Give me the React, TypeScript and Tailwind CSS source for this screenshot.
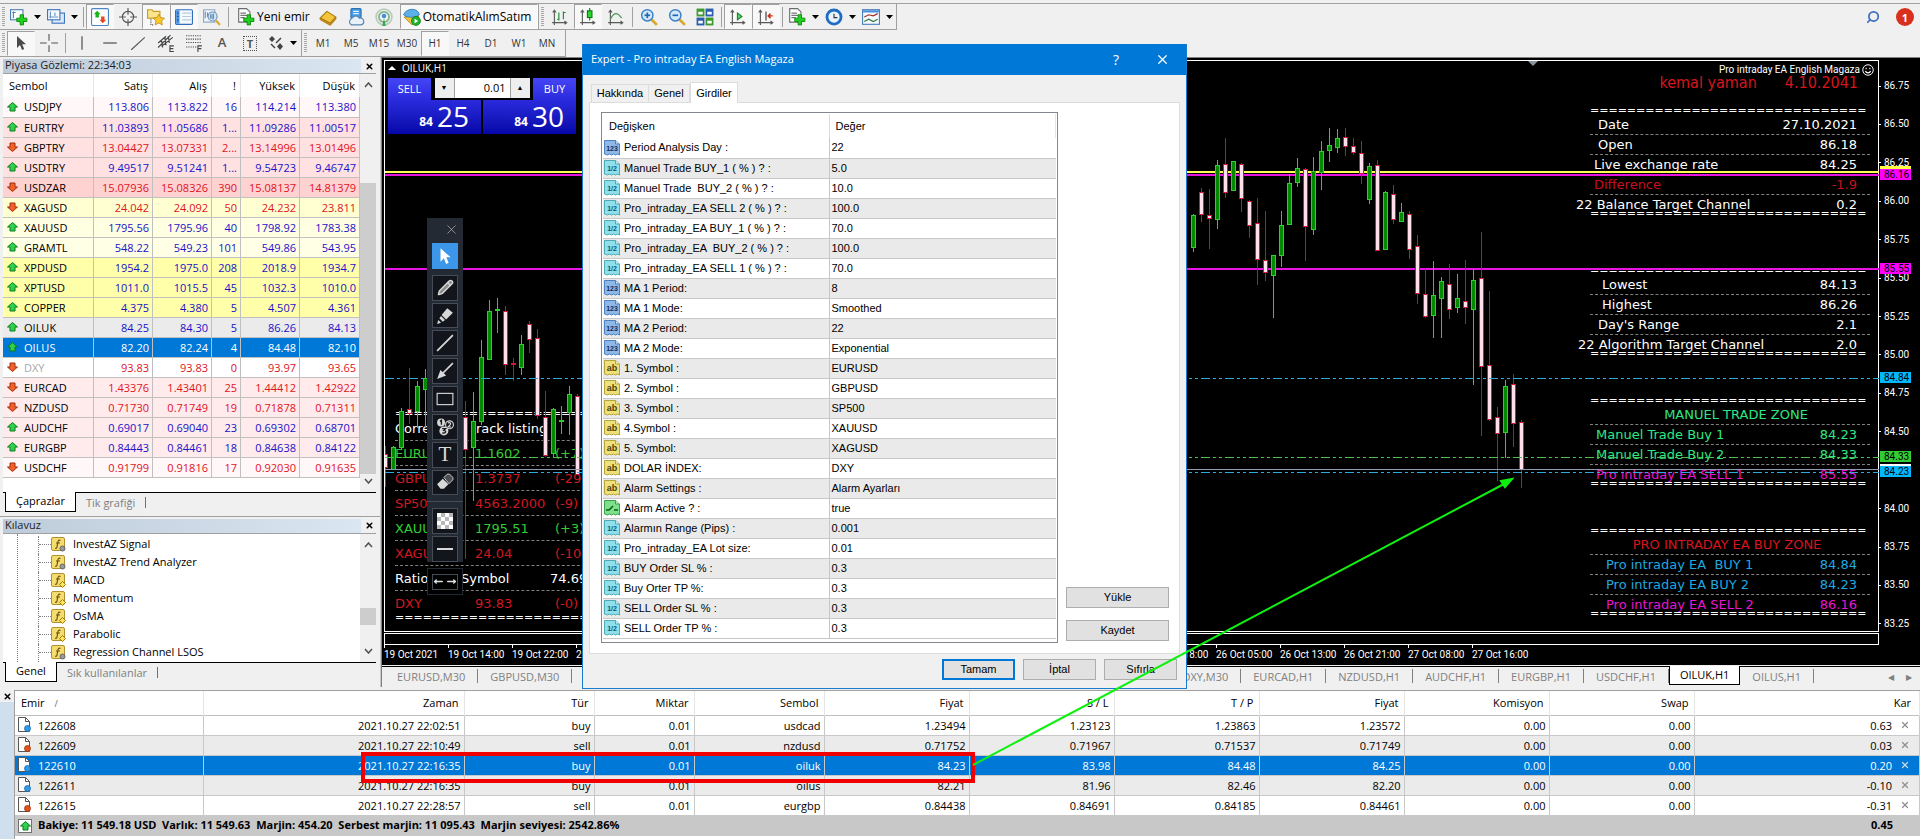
import React from 'react';
import { Search, Pencil, MoveLeft, MoveRight, X } from 'lucide-react';

type Side = 'up' | 'down';

interface Quote {
  symbol: string;
  side: Side;
  values: string[];
  bg: string;
  muted?: boolean;
}

const quotes: Quote[] = [
  { symbol: 'USDJPY', side: 'up', values: ['113.806', '113.822', '16', '114.214', '113.380'], bg: 'bg-[#fff7f8]' },
  { symbol: 'EURTRY', side: 'up', values: ['11.03893', '11.05686', '1...', '11.09286', '11.00517'], bg: 'bg-[#ffe1e1]' },
  { symbol: 'GBPTRY', side: 'down', values: ['13.04427', '13.07331', '2...', '13.14996', '13.01496'], bg: 'bg-[#ffe1e1]' },
  { symbol: 'USDTRY', side: 'up', values: ['9.49517', '9.51241', '1...', '9.54723', '9.46747'], bg: 'bg-[#ffe1e1]' },
  { symbol: 'USDZAR', side: 'down', values: ['15.07936', '15.08326', '390', '15.08137', '14.81379'], bg: 'bg-[#ffd2d2]' },
  { symbol: 'XAGUSD', side: 'down', values: ['24.042', '24.092', '50', '24.232', '23.811'], bg: 'bg-[#ffffd2]' },
  { symbol: 'XAUUSD', side: 'up', values: ['1795.56', '1795.96', '40', '1798.92', '1783.38'], bg: 'bg-[#ffffe1]' },
  { symbol: 'GRAMTL', side: 'up', values: ['548.22', '549.23', '101', '549.86', '543.95'], bg: 'bg-[#ffffe6]' },
  { symbol: 'XPDUSD', side: 'up', values: ['1954.2', '1975.0', '208', '2018.9', '1934.7'], bg: 'bg-[#ffffaa]' },
  { symbol: 'XPTUSD', side: 'up', values: ['1011.0', '1015.5', '45', '1032.3', '1010.0'], bg: 'bg-[#ffffaa]' },
  { symbol: 'COPPER', side: 'up', values: ['4.375', '4.380', '5', '4.507', '4.361'], bg: 'bg-[#ffffaa]' },
  { symbol: 'OILUK', side: 'up', values: ['84.25', '84.30', '5', '86.26', '84.13'], bg: 'bg-[#ebebeb]' },
  { symbol: 'OILUS', side: 'up', values: ['82.20', '82.24', '4', '84.48', '82.10'], bg: 'bg-[#0078d7]' },
  { symbol: 'DXY', side: 'down', values: ['93.83', '93.83', '0', '93.97', '93.65'], bg: 'bg-white', muted: true },
  { symbol: 'EURCAD', side: 'down', values: ['1.43376', '1.43401', '25', '1.44412', '1.42922'], bg: 'bg-[#ffebeb]' },
  { symbol: 'NZDUSD', side: 'down', values: ['0.71730', '0.71749', '19', '0.71878', '0.71311'], bg: 'bg-[#ffebeb]' },
  { symbol: 'AUDCHF', side: 'up', values: ['0.69017', '0.69040', '23', '0.69302', '0.68701'], bg: 'bg-[#ffebeb]' },
  { symbol: 'EURGBP', side: 'up', values: ['0.84443', '0.84461', '18', '0.84638', '0.84122'], bg: 'bg-[#ffebeb]' },
  { symbol: 'USDCHF', side: 'down', values: ['0.91799', '0.91816', '17', '0.92030', '0.91635'], bg: 'bg-[#fff7f8]' },
];

const indicators = [
  { name: 'InvestAZ Signal', custom: true },
  { name: 'InvestAZ Trend Analyzer', custom: true },
  { name: 'MACD', custom: false },
  { name: 'Momentum', custom: false },
  { name: 'OsMA', custom: false },
  { name: 'Parabolic', custom: false },
  { name: 'Regression Channel LSOS', custom: true },
];

type ParamKind = 'int' | 'double' | 'string' | 'bool';

const params: [ParamKind, string, string][] = [
  ['int', 'Period Analysis Day :', '22'],
  ['double', 'Manuel Trade BUY_1 ( % ) ? :', '5.0'],
  ['double', 'Manuel Trade  BUY_2 ( % ) ? :', '10.0'],
  ['double', 'Pro_intraday_EA SELL 2 ( % ) ? :', '100.0'],
  ['double', 'Pro_intraday_EA BUY_1 ( % ) ? :', '70.0'],
  ['double', 'Pro_intraday_EA  BUY_2 ( % ) ? :', '100.0'],
  ['double', 'Pro_intraday_EA SELL 1 ( % ) ? :', '70.0'],
  ['int', 'MA 1 Period:', '8'],
  ['int', 'MA 1 Mode:', 'Smoothed'],
  ['int', 'MA 2 Period:', '22'],
  ['int', 'MA 2 Mode:', 'Exponential'],
  ['string', '1. Symbol :', 'EURUSD'],
  ['string', '2. Symbol :', 'GBPUSD'],
  ['string', '3. Symbol :', 'SP500'],
  ['string', '4.Symbol :', 'XAUUSD'],
  ['string', '5. Symbol:', 'XAGUSD'],
  ['string', 'DOLAR İNDEX:', 'DXY'],
  ['string', 'Alarm Settings :', 'Alarm Ayarları'],
  ['bool', 'Alarm Active ? :', 'true'],
  ['double', 'Alarmın Range (Pips) :', '0.001'],
  ['double', 'Pro_intraday_EA Lot size:', '0.01'],
  ['double', 'BUY Order SL % :', '0.3'],
  ['double', 'Buy Orter TP %:', '0.3'],
  ['double', 'SELL Order SL % :', '0.3'],
  ['double', 'SELL Order TP % :', '0.3'],
];

const orders = [
  ['122608', '2021.10.27 22:02:51', 'buy', '0.01', 'usdcad', '1.23494', '1.23123', '1.23863', '1.23572', '0.00', '0.00', '0.63'],
  ['122609', '2021.10.27 22:10:49', 'sell', '0.01', 'nzdusd', '0.71752', '0.71967', '0.71537', '0.71749', '0.00', '0.00', '0.03'],
  ['122610', '2021.10.27 22:16:35', 'buy', '0.01', 'oiluk', '84.23', '83.98', '84.48', '84.25', '0.00', '0.00', '0.20'],
  ['122611', '2021.10.27 22:16:35', 'buy', '0.01', 'oilus', '82.21', '81.96', '82.46', '82.20', '0.00', '0.00', '-0.10'],
  ['122615', '2021.10.27 22:28:57', 'sell', '0.01', 'eurgbp', '0.84438', '0.84691', '0.84185', '0.84461', '0.00', '0.00', '-0.31'],
];

// [x, high, low, body top, body bottom, bullish]
const candles: [number, number, number, number, number, number][] = [
  [3, 388, 429, 396, 409, 0],
  [11, 388, 412, 389, 411, 1],
  [19, 350, 392, 353, 389, 1],
  [27, 310, 366, 351, 355, 0],
  [35, 323, 370, 328, 353, 1],
  [43, 311, 369, 320, 331, 1],
  [83, 343, 501, 359, 391, 0],
  [91, 334, 443, 363, 389, 1],
  [99, 282, 367, 299, 363, 1],
  [107, 242, 301, 253, 301, 1],
  [115, 240, 275, 251, 252, 1],
  [123, 248, 317, 253, 306, 0],
  [131, 300, 323, 305, 306, 0],
  [139, 277, 317, 286, 309, 1],
  [147, 263, 295, 266, 281, 0],
  [155, 271, 361, 280, 357, 0],
  [163, 333, 399, 359, 397, 0],
  [171, 350, 399, 351, 395, 1],
  [179, 348, 376, 362, 363, 1],
  [187, 328, 377, 336, 354, 1],
  [195, 336, 417, 338, 416, 0],
  [811, 156, 194, 157, 189, 1],
  [819, 130, 164, 134, 156, 0],
  [827, 131, 191, 157, 160, 0],
  [835, 102, 171, 107, 161, 1],
  [843, 80, 140, 106, 134, 0],
  [851, 103, 132, 103, 132, 1],
  [859, 105, 154, 106, 140, 0],
  [867, 142, 180, 143, 167, 0],
  [875, 140, 227, 165, 201, 0],
  [883, 153, 223, 202, 214, 0],
  [891, 197, 260, 197, 217, 1],
  [899, 153, 209, 167, 197, 1],
  [907, 116, 166, 125, 166, 1],
  [915, 100, 129, 110, 124, 1],
  [923, 110, 203, 111, 168, 0],
  [931, 99, 177, 113, 171, 1],
  [939, 83, 132, 93, 114, 1],
  [947, 70, 104, 87, 92, 1],
  [955, 71, 95, 80, 89, 1],
  [963, 70, 98, 79, 88, 0],
  [971, 80, 97, 88, 94, 0],
  [979, 83, 126, 95, 115, 0],
  [987, 105, 146, 108, 141, 1],
  [995, 102, 192, 107, 192, 0],
  [1003, 133, 191, 134, 191, 1],
  [1011, 127, 166, 136, 161, 0],
  [1019, 145, 164, 154, 163, 1],
  [1027, 153, 201, 156, 191, 0],
  [1035, 177, 246, 188, 235, 0],
  [1043, 211, 260, 236, 258, 0],
  [1051, 203, 280, 237, 257, 1],
  [1059, 219, 280, 223, 240, 1],
  [1067, 206, 261, 226, 251, 0],
  [1075, 216, 255, 240, 249, 1],
  [1083, 202, 266, 243, 249, 0],
  [1091, 211, 327, 222, 251, 1],
  [1099, 174, 378, 220, 308, 0],
  [1107, 233, 363, 307, 361, 0],
  [1115, 349, 423, 359, 375, 0],
  [1123, 322, 400, 328, 374, 1],
  [1131, 316, 389, 326, 365, 0],
  [1139, 362, 430, 364, 411, 0],
];

const dates = [
  '19 Oct 2021', '19 Oct 14:00', '19 Oct 22:00', '20 Oct 07:00', '20 Oct 15:00', '20 Oct 23:00',
  '21 Oct 08:00', '21 Oct 16:00', '22 Oct 01:00', '22 Oct 09:00', '22 Oct 17:00', '25 Oct 02:00',
  '25 Oct 18:00', '26 Oct 05:00', '26 Oct 13:00', '26 Oct 21:00', '27 Oct 08:00', '27 Oct 16:00',
];

const prices = [
  '86.75', '86.50', '86.25', '86.00', '85.75', '85.50', '85.25', '85.00',
  '84.75', '84.50', '', '84.00', '83.75', '83.50', '83.25',
];

/* ---------- icons ---------- */

const Svg: React.FC<{ size?: number; className?: string; children: React.ReactNode }> = ({ size = 18, className, children }) => (
  <svg width={size} height={size} viewBox="0 0 16 16" fill="none" className={className} aria-hidden="true">
    {children}
  </svg>
);

const Plus = () => (
  <path d="M9 6h3v3h3v3h-3v3H9v-3H6V9h3z" fill="#1fd11f" stroke="#0a8a0a" strokeWidth="0.8" />
);

const Axes = () => (
  <path d="M3 2v13M1 13h13M1.500 4L3 2l1.500 2M12 11.500l2 1.500-2 1.500" stroke="#5a5a5a" />
);

const NewChartIcon = () => (
  <Svg>
    <rect x="0.500" y="1.500" width="11" height="9" fill="#fff" stroke="#4d7fb5" />
    <path d="M2 4h3M3 3v6" stroke="#4d7fb5" />
    <Plus />
  </Svg>
);

const ProfilesIcon = () => (
  <Svg>
    <rect x="4.500" y="4.500" width="11" height="9" fill="#dcebfb" stroke="#3f74b8" />
    <rect x="0.500" y="1.500" width="11" height="9" fill="#f5faff" stroke="#3f74b8" />
    <path d="M3 3v6M2 8h8M7 4v3" stroke="#6d94c4" />
  </Svg>
);

const MarketWatchIcon = () => (
  <Svg>
    <rect x="0.500" y="0.500" width="15" height="15" rx="1" fill="#fff" stroke="#4d86c5" />
    <path d="M5.500 2.500l3 3H7v3H4v-3H2.500z" fill="#17b417" />
    <path d="M10.500 13.500l-3-3H9v-3h3v3h1.500z" fill="#e8471c" />
  </Svg>
);

const CrosshairIcon = () => (
  <Svg>
    <circle cx="8" cy="8" r="5" stroke="#555" />
    <path d="M8 0v6M8 10v6M0 8h6M10 8h6" stroke="#555" />
  </Svg>
);

const NavigatorIcon = () => (
  <Svg>
    <path d="M0.500 1.500h4l1 1.500h6v6h-11z" fill="#fbe48b" stroke="#c79d2c" />
    <path d="M3.500 10v5h3" stroke="#555" strokeDasharray="1 1" />
    <path d="M10.500 5.500l1.500 3 3.500.5-2.500 2.500.6 3.500-3.100-1.700L7.400 15l.6-3.500L5.500 9l3.500-.5z" fill="#fcc92c" stroke="#b98711" strokeWidth="0.7" />
  </Svg>
);

const TerminalIcon = () => (
  <Svg>
    <rect x="0.500" y="1.500" width="15" height="13" rx="1" fill="#f4f9ff" stroke="#2f6db8" />
    <rect x="1" y="2" width="3" height="12" fill="#4b90dd" />
    <path d="M2.500 4v9" stroke="#123f77" strokeDasharray="1 2" />
    <path d="M6.500 4.500h8M6.500 7.500h8M6.500 10.500h8" stroke="#b9cbe0" />
  </Svg>
);

const TesterIcon = () => (
  <Svg>
    <path d="M0.500 1.500h10v11h-10z" fill="#eef5fc" stroke="#8fa9c4" />
    <path d="M2 3v6M4 4v4" stroke="#6a8cb2" />
    <circle cx="8.500" cy="7.500" r="4" fill="#cfe5f8" stroke="#7391b0" />
    <path d="M7 5.500v4M9 5v5" stroke="#3b6ba0" />
    <path d="M11.500 11l3.500 4" stroke="#d6a52b" strokeWidth="2" />
  </Svg>
);

const NewOrderIcon = () => (
  <Svg>
    <path d="M1.500.5h7l3 3v9h-10z" fill="#fff" stroke="#6b6b6b" />
    <path d="M3 4.500h5M3 6.500h6M3 8.500h4" stroke="#777" />
    <Plus />
  </Svg>
);

const BookIcon = () => (
  <Svg>
    <path d="M1 9l6-6 8 5-5 5.500z" fill="#f3c43c" stroke="#a9770d" />
    <path d="M1 9v1.500l9 5 5-5.500V8l-5 5.500z" fill="#c58d1a" stroke="#a9770d" strokeWidth="0.6" />
  </Svg>
);

const CloudIcon = () => (
  <Svg>
    <rect x="3.500" y="0.500" width="9" height="9" rx="1" fill="#3f9be6" stroke="#2b73b3" />
    <path d="M5.500 3h5M5.500 5h5" stroke="#e4f2fd" strokeWidth="1.2" />
    <path d="M4 15a3 3 0 010-5.500 4 4 0 017-.5 3 3 0 011.500 6z" fill="#e7f1fa" stroke="#5a86ad" />
  </Svg>
);

const SignalIcon = () => (
  <Svg>
    <circle cx="8" cy="8" r="7" stroke="#b5cdb9" strokeWidth="1.5" />
    <circle cx="8" cy="8" r="4.500" stroke="#7fb08a" strokeWidth="1.5" />
    <circle cx="8" cy="7" r="2" fill="#3f8fd6" />
    <path d="M8 9l-1.500 7h3z" fill="#36a64f" />
  </Svg>
);

const AutoTradeIcon = () => (
  <Svg>
    <path d="M1 8l7 7 5-4 1-4z" fill="#f1c53d" stroke="#a67b10" strokeWidth="0.7" />
    <path d="M0.500 6c2-6 13-7 14 0-3 3-11 3-14 0z" fill="#5cb0ea" stroke="#2c76b0" strokeWidth="0.7" />
    <circle cx="11.500" cy="11.500" r="4" fill="#20b42c" stroke="#0d7a17" strokeWidth="0.7" />
    <path d="M10.300 9.500v4l3.200-2z" fill="#fff" />
  </Svg>
);

const BarsIcon = () => (
  <Svg>
    <Axes />
    <path d="M7 4v7M7 10H5.500M11 3v7M11 4h2" stroke="#1c8a2b" />
  </Svg>
);

const CandlesIcon = () => (
  <Svg>
    <Axes />
    <path d="M9.500 0v11" stroke="#0d7a17" />
    <rect x="7.500" y="2.500" width="4" height="6" fill="#2ed52e" stroke="#0d7a17" />
  </Svg>
);

const LineIcon = () => (
  <Svg>
    <Axes />
    <path d="M3 10c3-6 6-7 10-1" stroke="#4a9a56" />
  </Svg>
);

const ZoomIcon: React.FC<{ plus?: boolean }> = ({ plus }) => (
  <Svg>
    <path d="M10 10l5 5" stroke="#d9a92c" strokeWidth="2.5" />
    <circle cx="6.500" cy="6.500" r="5" fill="#d3e9fb" stroke="#3a82c8" strokeWidth="1.3" />
    <path d="M4 6.500h5" stroke="#2168b0" strokeWidth="1.5" />
    {plus && <path d="M6.500 4v5" stroke="#2168b0" strokeWidth="1.5" />}
  </Svg>
);

const TileIcon = () => (
  <Svg>
    <rect x="0.500" y="0.500" width="7" height="7" fill="#3d9a2c" />
    <rect x="8.500" y="0.500" width="7" height="7" fill="#2a5cb0" />
    <rect x="0.500" y="8.500" width="7" height="7" fill="#2a5cb0" />
    <rect x="8.500" y="8.500" width="7" height="7" fill="#3d9a2c" />
    <path d="M2 4.500h4M10 4.500h4M2 12.500h4M10 12.500h4" stroke="#fff" strokeWidth="2.5" />
  </Svg>
);

const AutoScrollIcon = () => (
  <Svg>
    <Axes />
    <path d="M7.500 4.500l4 3-4 3z" fill="#5fd070" stroke="#1c8a2b" />
  </Svg>
);

const ShiftIcon = () => (
  <Svg>
    <Axes />
    <path d="M8 3v8" stroke="#333" />
    <path d="M14 7h-4M12 5l-2 2 2 2" stroke="#c83214" strokeWidth="1.3" />
  </Svg>
);

const ClockIcon = () => (
  <Svg>
    <circle cx="8" cy="8" r="7.500" fill="#1f6dc0" />
    <circle cx="8" cy="8" r="5" fill="#e8f3fd" />
    <path d="M8 5v3.500h3" stroke="#333" />
  </Svg>
);

const TemplateIcon = () => (
  <Svg>
    <rect x="0.500" y="1.500" width="15" height="13" fill="#f6fafe" stroke="#4b7fb8" />
    <path d="M1 3h14" stroke="#4b90dd" strokeWidth="2" />
    <path d="M2 8l4-2 4 1 4-2" stroke="#a03020" />
    <path d="M2 12l4-2 4 2 4-2" stroke="#2f7a3a" />
  </Svg>
);

const PointerIcon: React.FC<{ fill: string; size?: number }> = ({ fill, size = 16 }) => (
  <Svg size={size}>
    <path d="M4 1v12l3-3 2 5 2.200-1-2-4.800H13z" fill={fill} />
  </Svg>
);

const ArrowIcon: React.FC<{ side: Side }> = ({ side }) => (
  <svg width="11" height="10" viewBox="0 0 11 10" className="shrink-0" aria-hidden="true">
    {side === 'up' ? (
      <path d="M5.500 0.500L10.500 5H8v4H3V5H0.500z" fill="#2fd04a" stroke="#0b7a1f" />
    ) : (
      <path d="M5.500 9.500L0.500 5H3V1h5v4h2.500z" fill="#f2602c" stroke="#9c2f0b" />
    )}
  </svg>
);

const FunctionIcon: React.FC<{ custom: boolean }> = ({ custom }) => (
  <svg width="15" height="15" viewBox="0 0 15 15" className="shrink-0" aria-hidden="true">
    <rect x="0.500" y="0.500" width="13" height="13" rx="1.500" fill="#f5dc6e" stroke="#b1902f" />
    <path d="M9.500 3.500c-2-1-2.500.5-2.700 2L6 10c-.3 1.500-1 1.500-2 1M5 6h4" stroke="#6d5311" strokeWidth="1.2" fill="none" />
    {custom ? (
      <circle cx="11.500" cy="11.500" r="2.500" fill="#9a9a9a" stroke="#666" />
    ) : (
      <path d="M11.500 8.500l3 3-3 3-3-3z" fill="#ffe45c" stroke="#9b7a14" />
    )}
  </svg>
);

const paramStyles: Record<ParamKind, { fill: string; stroke: string; text: string; color: string }> = {
  int: { fill: '#8db8e8', stroke: '#4c7fbd', text: '123', color: '#0d2f66' },
  double: { fill: '#8fe0ea', stroke: '#4ba9b8', text: '1/2', color: '#0d5a6a' },
  string: { fill: '#eee07a', stroke: '#b5a23a', text: 'ab', color: '#4f4208' },
  bool: { fill: '#7fe08a', stroke: '#3d9c4a', text: '', color: '#0d5a1a' },
};

const ParamIcon: React.FC<{ kind: ParamKind }> = ({ kind }) => {
  const s = paramStyles[kind];
  return (
    <svg width="16" height="16" viewBox="0 0 16 16" className="shrink-0" aria-hidden="true">
      <path d="M.5.5h11l4 3.500v11l-2-1-2 1-2-1-2 1-2-1-2 1-3-1z" fill={s.fill} stroke={s.stroke} />
      <path d="M11.500.5V4h4" fill="#fff" fillOpacity="0.6" stroke={s.stroke} />
      {s.text ? (
        <text x="8" y="11" textAnchor="middle" fontSize={kind === 'string' ? 9 : 7} fontWeight="700" fontFamily="Liberation Sans, sans-serif" fill={s.color}>
          {s.text}
        </text>
      ) : (
        <path d="M2 10h3l4-4M10 10h4" stroke={s.color} strokeWidth="1.5" fill="none" />
      )}
    </svg>
  );
};

const OrderIcon: React.FC<{ type: string }> = ({ type }) => (
  <svg width="14" height="16" viewBox="0 0 14 16" className="shrink-0" aria-hidden="true">
    <path d="M.5.5h7l4 4v10H.5z" fill="#fff" stroke="#555" />
    <path d="M7.500.5v4h4" fill="none" stroke="#555" />
    <circle cx="9.500" cy="11.500" r="3" fill={type === 'buy' ? '#2f9be8' : '#e0521c'} stroke={type === 'buy' ? '#1565a8' : '#98310a'} strokeWidth="0.8" />
  </svg>
);

const Chevron: React.FC<{ down?: boolean }> = ({ down }) => (
  <svg width="9" height="6" viewBox="0 0 9 6" fill="none" aria-hidden="true">
    <path d={down ? 'M1 1l3.500 4L8 1' : 'M1 5l3.500-4L8 5'} stroke="#505050" strokeWidth="1.5" />
  </svg>
);

/* ---------- toolbars ---------- */

const Grip = () => <span className="mx-0.5 h-5 w-[3px] shrink-0 bg-[repeating-linear-gradient(#a8a8a8_0_1px,#f0f0f0_1px_2px)]" />;
const Divider = () => <span className="mx-0.5 h-5 w-px shrink-0 bg-[#a0a0a0]" />;

const ToolButton: React.FC<{ label: string; pressed?: boolean; menu?: boolean; children: React.ReactNode }> = ({ label, pressed, menu, children }) => (
  <button
    type="button"
    aria-label={label}
    className={`flex h-[25px] shrink-0 items-center justify-center ${menu ? 'w-[37px] gap-1.5' : 'w-7'} ${
      pressed ? 'border border-[#f8f8f8] border-l-[#a0a0a0] border-t-[#a0a0a0] bg-[#f8f8f8]' : ''
    }`}
  >
    {children}
    {menu && (
      <svg width="7" height="4" viewBox="0 0 7 4" aria-hidden="true">
        <path d="M0 0h7L3.500 4z" fill="#000" />
      </svg>
    )}
  </button>
);

const periods = ['M1', 'M5', 'M15', 'M30', 'H1', 'H4', 'D1', 'W1', 'MN'];

const Toolbars = () => (
  <header className="bg-[#f0f0f0] pt-[3px]">
    <div className="flex h-[27px] items-center border-t border-[#a0a0a0]">
      <div className="flex h-full items-center border-b border-r border-[#a0a0a0]">
        <Grip />
        <ToolButton label="Yeni grafik" menu><NewChartIcon /></ToolButton>
        <ToolButton label="Profiller" menu><ProfilesIcon /></ToolButton>
        <Divider />
        <ToolButton label="Piyasa Gözlemi" pressed><MarketWatchIcon /></ToolButton>
        <ToolButton label="Veri penceresi"><CrosshairIcon /></ToolButton>
        <ToolButton label="Kılavuz" pressed><NavigatorIcon /></ToolButton>
        <ToolButton label="Terminal" pressed><TerminalIcon /></ToolButton>
        <ToolButton label="Strateji testi"><TesterIcon /></ToolButton>
        <Divider />
        <button type="button" className="ml-1.5 mr-1 flex shrink-0 items-center gap-0.5 text-[12px] text-black">
          <NewOrderIcon />
          Yeni emir
        </button>
        <ToolButton label="MetaEditor"><BookIcon /></ToolButton>
        <ToolButton label="Bulut"><CloudIcon /></ToolButton>
        <ToolButton label="Sinyaller"><SignalIcon /></ToolButton>
        <button type="button" className="ml-0.5 flex h-[25px] w-[138px] shrink-0 items-center gap-0.5 border border-l-[#a0a0a0] border-t-[#a0a0a0] border-white bg-[#f8f8f8] px-0.5 text-[12px] text-black">
          <AutoTradeIcon />
          OtomatikAlımSatım
        </button>
      </div>
      <div className="flex h-full items-center border-b border-r border-[#a0a0a0]">
        <Grip />
        <ToolButton label="Çubuk grafik"><BarsIcon /></ToolButton>
        <ToolButton label="Mum grafik" pressed><CandlesIcon /></ToolButton>
        <ToolButton label="Çizgi grafik"><LineIcon /></ToolButton>
        <Divider />
        <ToolButton label="Yakınlaştır"><ZoomIcon plus /></ToolButton>
        <ToolButton label="Uzaklaştır"><ZoomIcon /></ToolButton>
        <ToolButton label="Döşe"><TileIcon /></ToolButton>
        <Divider />
        <ToolButton label="Otomatik kaydır" pressed><AutoScrollIcon /></ToolButton>
        <ToolButton label="Grafik kaydırma" pressed><ShiftIcon /></ToolButton>
        <Divider />
        <ToolButton label="Göstergeler" menu><NewOrderIcon /></ToolButton>
        <ToolButton label="Periyotlar" menu><ClockIcon /></ToolButton>
        <ToolButton label="Şablonlar" menu><TemplateIcon /></ToolButton>
      </div>
      <div className="ml-auto flex items-center gap-4 pr-1.5">
        <button type="button" aria-label="Ara">
          <Search size={14} strokeWidth={3} className="-scale-x-100 text-[#3a6fc4]" />
        </button>
        <button type="button" aria-label="Bildirimler" className="flex h-[18px] w-[18px] items-center justify-center rounded-full bg-[#d8301c] text-[11px] font-bold leading-none text-white">
          1
        </button>
      </div>
    </div>
    <div className="flex h-[27px] items-center">
      <div className="flex h-full items-center border-b border-r border-[#a0a0a0]">
        <Grip />
        <ToolButton label="İmleç" pressed><PointerIcon fill="#4a4a4a" /></ToolButton>
        <ToolButton label="Artı imleç">
          <Svg><path d="M8 0v6M8 10v6M0 8h6M10 8h6" stroke="#555" /></Svg>
        </ToolButton>
        <Divider />
        <ToolButton label="Dikey çizgi"><Svg><path d="M8 2v12" stroke="#444" /></Svg></ToolButton>
        <ToolButton label="Yatay çizgi"><Svg><path d="M2 8h12" stroke="#444" /></Svg></ToolButton>
        <ToolButton label="Trend çizgisi"><Svg><path d="M2 14L14 3" stroke="#555" /></Svg></ToolButton>
        <ToolButton label="Kanal">
          <Svg>
            <path d="M1 12L12 1M1 8l7-6M4 11l10-8M4 5l1 7M7 3l1 7M10 2l1 6" stroke="#444" />
            <path d="M15 10.500h-3.500v5H15M11.500 13h3" stroke="#444" />
          </Svg>
        </ToolButton>
        <ToolButton label="Fibonacci">
          <Svg>
            <path d="M1 1.500h14M1 4.500h14M1 7.500h14M1 11.500h9" stroke="#444" strokeDasharray="1 1" />
            <path d="M15 10.500h-3.500V16M11.500 13h3" stroke="#444" />
          </Svg>
        </ToolButton>
        <ToolButton label="Metin"><span className="text-[13px] font-semibold text-[#555]">A</span></ToolButton>
        <ToolButton label="Metin etiketi">
          <span className="border border-dotted border-[#555] px-[3px] text-[11px] font-bold leading-[13px] text-[#555]">T</span>
        </ToolButton>
        <ToolButton label="Oklar" menu>
          <Svg size={16}>
            <path d="M4 1l3 3-3 3-3-3zM12 8l3 3.500-3 3.500-3-3.500z" fill="#444" />
            <path d="M8 8l5-5M3 9l4 4" stroke="#444" strokeWidth="1.5" />
          </Svg>
        </ToolButton>
      </div>
      <div className="flex h-full items-center border-b border-r border-[#a0a0a0] pr-1 text-[10px] text-[#333]">
        <Grip />
        {periods.map((p) => (
          <ToolButton key={p} label={p} pressed={p === 'H1'}>{p}</ToolButton>
        ))}
      </div>
    </div>
  </header>
);

/* ---------- left panels ---------- */

const PanelTitle: React.FC<{ children: React.ReactNode }> = ({ children }) => (
  <div className="flex h-3.5 items-center justify-between pr-0.5">
    <h2 className="h-full flex-1 bg-linear-to-r from-[#becbd9] to-[#dae6f1] px-0.5 text-[11px] leading-3 text-[#222]">{children}</h2>
    <button type="button" aria-label="Kapat" className="px-1 text-black">
      <X size={9} strokeWidth={4} />
    </button>
  </div>
);

const Scrollbar: React.FC<{ thumb: string }> = ({ thumb }) => (
  <div className="flex w-4 shrink-0 flex-col items-center bg-[#f0f0f0] py-2">
    <Chevron />
    <span className={`w-full bg-[#cdcdcd] ${thumb}`} />
    <span className="mt-auto leading-none"><Chevron down /></span>
  </div>
);

const PanelTabs: React.FC<{ tabs: string[] }> = ({ tabs }) => (
  <div className="mr-1 flex h-5 border-t border-black text-[11px]" role="tablist">
    <button type="button" role="tab" aria-selected="true" className="-mt-px ml-0.5 border border-t-0 border-black bg-white px-2.5 text-black">
      {tabs[0]}
    </button>
    <button type="button" role="tab" aria-selected="false" className="my-1 border-r border-[#707070] px-2.5 leading-3 text-[#808080]">
      {tabs[1]}
    </button>
  </div>
);

const MarketWatch = () => (
  <section className="border-b border-[#a0a0a0] pb-1 pl-[3px] pt-0.5">
    <PanelTitle>Piyasa Gözlemi: 22:34:03</PanelTitle>
    <div className="mr-1 flex border-t border-[#a0a0a0] bg-white">
      <table className="mb-3.5 min-w-0 flex-1 table-fixed border-collapse text-[11px] leading-none">
        <colgroup>
          <col />
          <col className="w-[59px]" />
          <col className="w-[59px]" />
          <col className="w-[29px]" />
          <col className="w-[59px]" />
          <col className="w-[60px]" />
        </colgroup>
        <thead>
          <tr className="h-[23px]">
            {['Sembol', 'Satış', 'Alış', '!', 'Yüksek', 'Düşük'].map((h, i) => (
              <th key={h} scope="col" className={`border-r border-[#e5e5e5] font-normal text-black ${i === 0 ? 'pl-[6px] text-left' : 'pr-1 text-right'}`}>
                {h}
              </th>
            ))}
          </tr>
        </thead>
        <tbody>
          {quotes.map((q) => {
            const selected = q.symbol === 'OILUS';
            const color = selected ? 'text-white' : q.side === 'up' ? 'text-[#1a12c8]' : 'text-[#e0141e]';
            return (
              <tr key={q.symbol} className={`h-5 border-b border-[#c0c0c0] ${q.bg}`}>
                <td className={`border-r border-[#c0c0c0] pl-1 ${selected ? 'text-white' : q.muted ? 'text-[#a8a8a8]' : 'text-black'}`}>
                  <span className="flex items-center gap-1.5"><ArrowIcon side={q.side} />{q.symbol}</span>
                </td>
                {q.values.map((v, i) => (
                  <td key={i} className={`border-r border-[#c0c0c0] pr-[3px] text-right ${color}`}>{v}</td>
                ))}
              </tr>
            );
          })}
        </tbody>
      </table>
      <Scrollbar thumb="mt-[95px] h-[291px]" />
    </div>
    <PanelTabs tabs={['Çaprazlar', 'Tik grafiği']} />
  </section>
);

const Navigator = () => (
  <section className="pb-1 pl-[3px] pt-0.5">
    <PanelTitle>Kılavuz</PanelTitle>
    <div className="mr-1 flex border-t border-[#a0a0a0] bg-white">
      <ul className="ml-3.5 flex-1 border-l border-dotted border-[#808080] pl-5 pt-0.5 text-[11px] text-black">
        {indicators.map((item) => (
          <li key={item.name} className="flex h-[18px] items-center border-l border-dotted border-[#808080]">
            <span className="w-3 border-t border-dotted border-[#808080]" />
            <FunctionIcon custom={item.custom} />
            <span className="pl-[7px]">{item.name}</span>
          </li>
        ))}
      </ul>
      <Scrollbar thumb="mt-[60px] h-[17px]" />
    </div>
    <PanelTabs tabs={['Genel', 'Sık kullanılanlar']} />
  </section>
);

/* ---------- chart ---------- */

interface InfoRow {
  label: string;
  value: string;
  indent: string;
  color: string;
}

const DoubleRule: React.FC<{ count?: number; className?: string }> = ({ count = 30, className = '' }) => (
  <p className={`whitespace-nowrap text-[11px] leading-3 text-white ${className}`}>{'='.repeat(count)}</p>
);

const InfoBlock: React.FC<{ top: string; title?: string; titleClass?: string; rows: InfoRow[] }> = ({ top, title, titleClass, rows }) => (
  <div className={`absolute right-[50px] w-[300px] font-['DejaVu_Sans','Verdana',sans-serif] text-[13px] ${top}`}>
    <DoubleRule className="-mb-0.5 pl-5" />
    {title && <p className={`ml-5 h-5 border-b border-dashed border-[#808080] text-center leading-5 ${titleClass}`}>{title}</p>}
    {rows.map((r, i) => (
      <div key={r.label} className={`relative flex h-5 justify-between pr-[13px] leading-5 ${r.indent} ${r.color}`}>
        <span className="whitespace-pre">{r.label}</span>
        <span>{r.value}</span>
        {i < rows.length - 1 && <span className="absolute bottom-0 left-5 right-0 border-b border-dashed border-[#808080]" />}
      </div>
    ))}
    <DoubleRule className="-mt-[7px] pl-5" />
  </div>
);

const correlations = [
  ['EURUSD', '1.1602', '(+7)', 'text-[#32cd32]'],
  ['GBPUSD', '1.3737', '(-29)', 'text-[#d01820]'],
  ['SP500', '4563.2000', '(-9)', 'text-[#d01820]'],
  ['XAUUSD', '1795.51', '(+3)', 'text-[#32cd32]'],
  ['XAGUSD', '24.04', '(-10)', 'text-[#d01820]'],
];

const CorrelationList = () => (
  <div className="absolute left-[13px] top-[350px] w-[200px] font-['DejaVu_Sans','Verdana',sans-serif] text-[13px] text-white">
    <DoubleRule count={21} className="-mb-1" />
    <p className="h-[25px] border-b border-dashed border-[#808080] leading-[25px]">Correlation track listing</p>
    {correlations.map(([name, rate, diff, color]) => (
      <div key={name} className={`flex h-[25px] border-b border-dashed border-[#808080] leading-[25px] ${color}`}>
        <span className="w-20">{name}</span>
        <span className="w-20">{rate}</span>
        <span>{diff}</span>
      </div>
    ))}
    <div className="flex h-[25px] border-b border-dashed border-[#808080] leading-[25px]">
      <span className="w-[66px]">Ratio</span>
      <span className="w-[89px]">Symbol</span>
      <span>74.69</span>
    </div>
    <div className="flex h-[25px] leading-[25px] text-[#d01820]">
      <span className="w-20">DXY</span>
      <span className="w-20">93.83</span>
      <span>(-0)</span>
    </div>
    <DoubleRule count={21} className="-mt-1" />
  </div>
);

const ChartCanvas = () => (
  <svg className="absolute inset-y-0 left-[3px] h-full w-full" shapeRendering="crispEdges" aria-hidden="true">
    <rect y="113" width="100%" height="2" fill="#ffff55" />
    <rect y="116" width="100%" height="2" fill="#e815e0" />
    <rect y="210" width="100%" height="2" fill="#e815e0" />
    <g transform="translate(-3 0)">
      {candles.map(([x, high, low, top, bottom, up]) => (
        <g key={x} stroke={up ? '#32cd32' : '#dc143c'}>
          <line x1={x} x2={x} y1={high} y2={low} stroke={up ? '#32cd32' : '#b81c1c'} />
          <rect x={x - 2} y={top} width="4" height={Math.max(bottom - top, 1)} fill={up ? '#008a00' : '#ffe0ea'} />
        </g>
      ))}
    </g>
    <line x2="100%" y1="320" y2="320" stroke="#2fa8dc" strokeDasharray="9 3 3 3 3 3" />
    <line x2="100%" y1="399" y2="399" stroke="#4fbf4f" strokeDasharray="9 3 3 3 3 3" />
    <line x2="100%" y1="411" y2="411" stroke="#8f9bb0" />
    <line x2="100%" y1="414" y2="414" stroke="#2fa8dc" strokeDasharray="9 3 3 3 3 3" />
  </svg>
);

const PriceTag: React.FC<{ className: string; children?: React.ReactNode }> = ({ className, children }) => (
  <span className={`absolute right-[9px] h-[11px] w-[31px] pl-1 text-[10px] leading-[11px] text-black ${className}`}>{children}</span>
);

const TradePanel = () => (
  <div className="absolute left-1.5 top-1 w-[188px] font-['Open_Sans','Segoe_UI',sans-serif] text-white">
    <p className="flex items-center gap-1.5 text-[10px] leading-3">
      <svg width="8" height="4" viewBox="0 0 8 4" aria-hidden="true"><path d="M4 0l4 4H0z" fill="#fff" /></svg>
      OILUK,H1
    </p>
    <div className="mt-1 flex h-[22px] items-start justify-between">
      <button type="button" className="h-full w-[43px] bg-linear-to-b from-[#4545f5] to-[#2a2add] text-[11px]">SELL</button>
      <div className="flex h-5 w-[95px] bg-white">
        <button type="button" aria-label="Azalt" className="w-5 border-r border-[#a0a0a0] bg-[#eee] text-[7px] text-black">▼</button>
        <input aria-label="Lot" defaultValue="0.01" className="w-0 flex-1 px-1 text-right text-[11px] text-black" />
        <button type="button" aria-label="Artır" className="w-5 border-l border-[#a0a0a0] bg-[#eee] text-[7px] text-black">▲</button>
      </div>
      <button type="button" className="h-full w-[43px] bg-linear-to-b from-[#4545f5] to-[#2a2add] text-[11px]">BUY</button>
    </div>
    <div className="flex h-[34px] gap-0.5">
      {['25', '30'].map((pips) => (
        <div key={pips} className="flex flex-1 items-end justify-end bg-linear-to-b from-[#2a2add] to-[#0606a8] pr-3">
          <span className="pb-[3px] pr-1 text-[12px] font-bold">84</span>
          <span className="pb-0.5 text-[28px] leading-8">{pips}</span>
        </div>
      ))}
    </div>
  </div>
);

const DrawButton: React.FC<{ label: string; active?: boolean; children: React.ReactNode }> = ({ label, active, children }) => (
  <button
    type="button"
    aria-label={label}
    className={`flex h-[26px] w-[26px] items-center justify-center ${active ? 'mb-1 bg-[#3c96ea]' : 'border border-[#464c55] bg-[#12161c]'} text-[#d8d8d8]`}
  >
    {children}
  </button>
);

const DrawToolbar = () => (
  <div className="absolute left-[45px] top-40 w-9">
    <div className="flex h-[344px] flex-col items-center gap-0.5 bg-[#242a33]">
      <button type="button" aria-label="Kapat" className="mb-1 ml-3 pt-1 text-[#c8c8c8]"><X size={15} strokeWidth={1} /></button>
      <DrawButton label="Seç" active><PointerIcon fill="#fff" size={18} /></DrawButton>
      <DrawButton label="Kalem"><Pencil size={17} fill="#8a8a8a" /></DrawButton>
      <DrawButton label="Vurgulayıcı">
        <Svg>
          <path d="M10 1l5 4-6 6-4-4z" fill="#d8d8d8" />
          <path d="M4.500 8l3.500 3.500-2 1.500-3-3zM2 11.500L4.500 14 1 15z" fill="#d8d8d8" />
        </Svg>
      </DrawButton>
      <DrawButton label="Çizgi"><Svg><path d="M1 15L15 1" stroke="#d8d8d8" strokeWidth="1.5" /></Svg></DrawButton>
      <DrawButton label="Ok"><Svg><path d="M15 1L6 10" stroke="#d8d8d8" strokeWidth="1.5" /><path d="M1 15l3-8 5 5z" fill="#d8d8d8" /></Svg></DrawButton>
      <DrawButton label="Dikdörtgen"><Svg><rect x="1" y="3" width="14" height="10" stroke="#d8d8d8" /></Svg></DrawButton>
      <DrawButton label="Numara">
        <Svg>
          <circle cx="4.500" cy="4" r="3.500" fill="#d8d8d8" />
          <circle cx="12" cy="6" r="3.500" stroke="#d8d8d8" fill="#12161c" />
          <circle cx="7" cy="11.500" r="4" fill="#d8d8d8" />
          <path d="M3.500 3l1.300-1v4" stroke="#12161c" strokeWidth="1.2" />
          <path d="M10.500 4.500c1.500-1 3 0 2.300 1.200L10.700 8h2.800" stroke="#d8d8d8" />
          <path d="M5.500 9.500h3l-1.500 1.500c2.500 0 2 3-1.500 2.300" stroke="#12161c" strokeWidth="1.2" />
        </Svg>
      </DrawButton>
      <DrawButton label="Yazı"><span className="font-['Liberation_Serif',serif] text-[21px] leading-none">T</span></DrawButton>
      <DrawButton label="Silgi">
        <Svg>
          <path d="M1 10l5-5 5 5-4 4H4z" fill="#d8d8d8" />
          <path d="M7 4l3-3h2l3 3v2l-3.500 3.500z" fill="#4a4f57" stroke="#d8d8d8" strokeWidth="0.8" />
        </Svg>
      </DrawButton>
      <span className="my-1 h-px w-full bg-[#464c55]" />
      <DrawButton label="Renk">
        <span className="h-4 w-4 bg-white bg-[repeating-conic-gradient(#b8b8b8_0_25%,#fff_0_50%)] bg-[length:8px_8px]" />
      </DrawButton>
      <DrawButton label="Kalınlık"><span className="h-0.5 w-4 bg-[#d8d8d8]" /></DrawButton>
    </div>
    <div className="mt-1.5 flex h-[27px] items-center justify-center border border-[#242a33] bg-black">
      <button type="button" aria-label="Genişlet" className="flex h-4 w-[26px] items-center justify-center gap-1 border border-[#464c55] text-[#e0e0e0]">
        <MoveLeft size={9} strokeWidth={4} />
        <MoveRight size={9} strokeWidth={4} />
      </button>
    </div>
  </div>
);

const WHITE = 'text-white';
const SPRING = 'text-[#2ee884]';
const SKY = 'text-[#1fa8e0]';
const MAGENTA = 'text-[#e815d0]';

const ChartTab: React.FC<{ name: string; active?: boolean }> = ({ name, active }) => (
  <button
    type="button"
    role="tab"
    aria-selected={!!active}
    className={
      active
        ? '-mt-px h-[19px] shrink-0 border border-t-0 border-black bg-white px-2.5 text-black'
        : 'my-0.5 h-3.5 shrink-0 border-r border-[#808080] px-3 leading-[13px] text-[#808080]'
    }
  >
    {name}
  </button>
);

const Chart = () => (
  <section className="flex min-w-0 flex-1 flex-col border-l border-t border-[#808080]">
    <div className="relative h-[607px] overflow-hidden bg-black font-['Roboto','Open_Sans',sans-serif]">
      <div className="absolute left-0.5 right-[41px] top-0.5 h-[572px] border border-white" />
      <div className="absolute left-0.5 right-[41px] top-[575px] h-3 border border-white" />

      <p className="absolute right-[46px] top-1 flex items-center gap-0.5 text-[10px] leading-4 text-white">
        Pro intraday EA English Magaza
        <Svg size={12}>
          <circle cx="8" cy="8" r="7" stroke="#fff" strokeWidth="1.3" />
          <path d="M4.500 9.500c1.500 3 5.500 3 7 0M5.500 5v2M10.500 5v2" stroke="#fff" strokeWidth="1.5" />
        </Svg>
      </p>
      <p className="absolute right-[62px] top-[15px] flex gap-7 font-['DejaVu_Sans_Condensed','DejaVu_Sans',sans-serif] text-[16px] leading-5 text-[#d8141c]">
        <span>kemal yaman</span>
        <span>4.10.2041</span>
      </p>

      <CorrelationList />
      <InfoBlock
        top="top-[47px]"
        rows={[
          { label: 'Date', value: '27.10.2021', indent: 'pl-7', color: WHITE },
          { label: 'Open', value: '86.18', indent: 'pl-7', color: WHITE },
          { label: 'Live exchange rate', value: '84.25', indent: 'pl-6', color: WHITE },
          { label: 'Difference', value: '-1.9', indent: 'pl-6', color: 'text-[#c8101c]' },
          { label: '22 Balance Target Channel', value: '0.2', indent: 'pl-1.5', color: WHITE },
        ]}
      />
      <InfoBlock
        top="top-[207px]"
        rows={[
          { label: 'Lowest', value: '84.13', indent: 'pl-8', color: WHITE },
          { label: 'Highest', value: '86.26', indent: 'pl-8', color: WHITE },
          { label: "Day's Range", value: '2.1', indent: 'pl-7', color: WHITE },
          { label: '22 Algorithm Target Channel', value: '2.0', indent: 'pl-2', color: WHITE },
        ]}
      />
      <InfoBlock
        top="top-[337px]"
        title="MANUEL TRADE ZONE"
        titleClass="pl-3 text-[#2ee884]"
        rows={[
          { label: 'Manuel Trade Buy 1', value: '84.23', indent: 'pl-[26px]', color: SPRING },
          { label: 'Manuel Trade Buy 2', value: '84.33', indent: 'pl-[26px]', color: SPRING },
          { label: 'Pro intraday EA SELL 1', value: '85.55', indent: 'pl-[26px]', color: MAGENTA },
        ]}
      />
      <InfoBlock
        top="top-[467px]"
        title="PRO INTRADAY EA BUY ZONE"
        titleClass="pr-1.5 text-[#d8141c]"
        rows={[
          { label: 'Pro intraday EA  BUY 1', value: '84.84', indent: 'pl-9', color: SKY },
          { label: 'Pro intraday EA BUY 2', value: '84.23', indent: 'pl-9', color: SKY },
          { label: 'Pro intraday EA SELL 2', value: '86.16', indent: 'pl-9', color: MAGENTA },
        ]}
      />

      <div className="absolute inset-y-0 left-0 right-[41px] overflow-hidden">
        <ChartCanvas />
      </div>
      <svg width="10" height="5" viewBox="0 0 10 5" className="absolute right-[382px] top-[3px]" aria-hidden="true">
        <path d="M0 0h10L5 5z" fill="#8a94a0" />
      </svg>

      {/* price scale */}
      <div className="absolute right-0 top-[22px] flex h-[550px] w-[41px] flex-col justify-between text-[10px] leading-3 text-white">
        {prices.map((p, i) => (
          <span key={i} className="flex h-3 items-center gap-[3px]">
            {p && <span className="h-px w-0.5 bg-white" />}
            {p}
          </span>
        ))}
      </div>
      <PriceTag className="top-[108px] bg-[#ffff40]" />
      <PriceTag className="top-[111px] bg-[#ff00ff]">86.16</PriceTag>
      <PriceTag className="top-[205px] bg-[#ff00ff]">85.55</PriceTag>
      <PriceTag className="top-[314px] bg-[#00b8ff]">84.84</PriceTag>
      <PriceTag className="top-[393px] bg-[#32cd32]">84.33</PriceTag>
      <PriceTag className="top-[406px] bg-white" />
      <PriceTag className="top-[408px] bg-[#00b8ff]">84.23</PriceTag>

      {/* time scale */}
      <div className="absolute left-0.5 top-[586px] flex text-[10px] leading-[13px] text-white">
        {dates.map((d) => (
          <span key={d} className="w-16 shrink-0 whitespace-nowrap pt-px">
            <span className="block h-[3px] w-px bg-white" />
            {d}
          </span>
        ))}
      </div>

      <TradePanel />
      <DrawToolbar />
    </div>
    <div className="mt-px flex h-[21px] items-start border-t border-black bg-[#f0f0f0] text-[11px]" role="tablist">
      <div className="flex pl-[3px]">
        <ChartTab name="EURUSD,M30" />
        <ChartTab name="GBPUSD,M30" />
      </div>
      <div className="ml-auto flex">
        {['DXY,M30', 'EURCAD,H1', 'NZDUSD,H1', 'AUDCHF,H1', 'EURGBP,H1', 'USDCHF,H1'].map((n) => (
          <ChartTab key={n} name={n} />
        ))}
        <ChartTab name="OILUK,H1" active />
        <ChartTab name="OILUS,H1" />
      </div>
      <div className="ml-[74px] mr-2 flex gap-3 text-[8px] leading-5 text-[#808080]">
        <button type="button" aria-label="Önceki">◀</button>
        <button type="button" aria-label="Sonraki">▶</button>
      </div>
    </div>
  </section>
);

/* ---------- expert dialog ---------- */

const DialogButton: React.FC<{ children: string; primary?: boolean; wide?: boolean }> = ({ children, primary, wide }) => (
  <button
    type="button"
    className={`h-[21px] bg-[#e1e1e1] text-black ${wide ? 'w-[103px]' : 'w-[73px]'} ${primary ? 'border-2 border-[#0078d7]' : 'border border-[#adadad]'}`}
  >
    {children}
  </button>
);

const ExpertDialog = () => (
  <div role="dialog" aria-label="Expert - Pro intraday EA English Magaza" className="absolute left-[582px] top-11 flex w-[605px] flex-col border border-t-0 border-[#1a7ad0] bg-[#f0f0f0] font-['Liberation_Sans',Arial,sans-serif] text-[11px] text-black">
    <div className="flex h-[31px] items-center bg-[#0078d7] pl-2 pr-4 font-['Open_Sans','Segoe_UI',sans-serif] text-white">
      <h2 className="flex-1">Expert - Pro intraday EA English Magaza</h2>
      <button type="button" aria-label="Yardım" className="mr-9 text-[14px]">?</button>
      <button type="button" aria-label="Kapat"><X size={15} strokeWidth={2} /></button>
    </div>
    <div className="mt-[7px] flex items-end pl-2" role="tablist">
      <button type="button" role="tab" aria-selected="false" className="h-[18px] w-[58px] border border-b-0 border-[#dcdcdc]">Hakkında</button>
      <button type="button" role="tab" aria-selected="false" className="h-[18px] w-[41px] border border-b-0 border-l-0 border-[#dcdcdc]">Genel</button>
      <button type="button" role="tab" aria-selected="true" className="relative -mb-px h-[21px] w-12 border border-b-0 border-[#dcdcdc] bg-white">Girdiler</button>
    </div>
    <div className="mx-1.5 flex items-end border border-[#dcdcdc] bg-white pb-2.5 pl-[11px] pr-2.5 pt-[9px]">
      <div className="w-[457px] border border-[#828790] p-px pb-[3px]">
        <table className="w-full table-fixed border-collapse">
          <colgroup>
            <col className="w-[226px]" />
            <col />
          </colgroup>
          <thead>
            <tr className="h-6">
              <th scope="col" className="border-r border-[#dcdcdc] pl-1.5 text-left font-normal">Değişken</th>
              <th scope="col" className="border-r border-[#e5e5e5] pl-1.5 text-left font-normal">Değer</th>
            </tr>
          </thead>
          <tbody>
            {params.map(([kind, name, value], i) => (
              <tr key={name} className={`h-5 border-b border-[#c8c8c8] leading-none ${i % 2 ? 'bg-[#eaeaea]' : 'bg-white'}`}>
                <td className="border-r border-[#c8c8c8] pl-px">
                  <span className="flex items-center gap-1 whitespace-pre"><ParamIcon kind={kind} />{name}</span>
                </td>
                <td className="pl-0.5">{value}</td>
              </tr>
            ))}
          </tbody>
        </table>
      </div>
      <div className="mb-0.5 ml-auto flex flex-col gap-3">
        <DialogButton wide>Yükle</DialogButton>
        <DialogButton wide>Kaydet</DialogButton>
      </div>
    </div>
    <div className="flex justify-end gap-2 pb-2 pr-[9px] pt-[5px]">
      <DialogButton primary>Tamam</DialogButton>
      <DialogButton>İptal</DialogButton>
      <DialogButton>Sıfırla</DialogButton>
    </div>
  </div>
);

/* ---------- terminal ---------- */

const orderHeads = ['Emir', 'Zaman', 'Tür', 'Miktar', 'Sembol', 'Fiyat', 'S / L', 'T / P', 'Fiyat', 'Komisyon', 'Swap', 'Kar'];

const Terminal = () => (
  <section className="flex bg-[#f0f0f0] pt-[3px]">
    <div className="w-3.5 shrink-0">
      <button type="button" aria-label="Kapat" className="flex h-3 w-full items-center justify-center text-black">
        <X size={9} strokeWidth={4} />
      </button>
      <div className="h-[137px] bg-[#d0dfee]" />
    </div>
    <div className="min-w-0 flex-1 border-l border-t border-[#a0a0a0] bg-white">
      <table className="w-full table-fixed border-collapse text-[11px] leading-none text-black">
        <colgroup>
          <col className="w-[188px]" />
          <col className="w-[261px]" />
          <col className="w-[130px]" />
          <col className="w-[100px]" />
          <col className="w-[130px]" />
          <col className="w-[145px]" />
          <col className="w-[145px]" />
          <col className="w-[145px]" />
          <col className="w-[145px]" />
          <col className="w-[145px]" />
          <col className="w-[145px]" />
          <col />
        </colgroup>
        <thead>
          <tr className="h-6 border-b border-[#c0c0c0]">
            {orderHeads.map((h, i) => (
              <th key={i} scope="col" className={`border-r border-[#e5e5e5] font-normal ${i === 0 ? 'pl-1.5 text-left' : i === 11 ? 'pr-2 text-right' : 'pr-[5px] text-right'}`}>
                {h}
                {i === 0 && <span className="pl-2.5 text-[9px] text-[#666]">/</span>}
              </th>
            ))}
          </tr>
        </thead>
        <tbody>
          {orders.map((o, i) => {
            const selected = o[0] === '122610';
            return (
              <tr key={o[0]} className={`h-5 border-b border-[#c8c8c8] ${selected ? 'bg-[#0078d7] text-white' : i % 2 ? 'bg-[#ebebeb]' : 'bg-white'}`}>
                {o.map((v, c) => (
                  <td key={c} className={`border-r border-[#c8c8c8] ${c === 0 ? 'pl-[3px]' : c === 11 ? 'pr-[9px]' : 'pr-[3px] text-right'}`}>
                    {c === 0 ? (
                      <span className="flex items-center gap-1.5"><OrderIcon type={o[2]} />{v}</span>
                    ) : c === 11 ? (
                      <span className="flex items-center justify-end gap-2">
                        {v}
                        <button type="button" aria-label={`${o[0]} kapat`} className={selected ? 'text-[#c8d8e8]' : 'text-[#909090]'}><X size={10} strokeWidth={3} /></button>
                      </span>
                    ) : (
                      v
                    )}
                  </td>
                ))}
              </tr>
            );
          })}
        </tbody>
      </table>
      <div className="flex h-5 items-center gap-1.5 bg-[#c8c8c8] pl-[3px] pr-[27px] text-[11px] font-bold text-black">
        <span className="flex h-3.5 w-3.5 items-center justify-center border border-[#707070] bg-white"><ArrowIcon side="up" /></span>
        <p className="flex-1 whitespace-pre">Bakiye: 11 549.18 USD  Varlık: 11 549.63  Marjin: 454.20  Serbest marjin: 11 095.43  Marjin seviyesi: 2542.86%</p>
        <span>0.45</span>
      </div>
    </div>
  </section>
);

const App: React.FC = () => (
  <div className="relative w-full overflow-hidden bg-[#f0f0f0] font-['Open_Sans','Segoe_UI',sans-serif]">
    <Toolbars />
    <main className="flex">
      <div className="w-[381px] shrink-0 border-r border-[#c8c8c8]">
        <MarketWatch />
        <Navigator />
      </div>
      <Chart />
    </main>
    <Terminal />
    <ExpertDialog />

    {/* marks drawn over the windows */}
    <div className="pointer-events-none absolute left-[361px] top-[752px] h-[31px] w-[614px] border-4 border-[#f00000]" />
    <svg className="pointer-events-none absolute inset-0 h-full w-full" aria-hidden="true">
      <path d="M973 765L1504 484" stroke="#10f010" strokeWidth="2" />
      <path d="M1512 479l-11 2 4 6z" fill="#10f010" stroke="#10f010" strokeWidth="2" />
    </svg>
  </div>
);

export default App;
